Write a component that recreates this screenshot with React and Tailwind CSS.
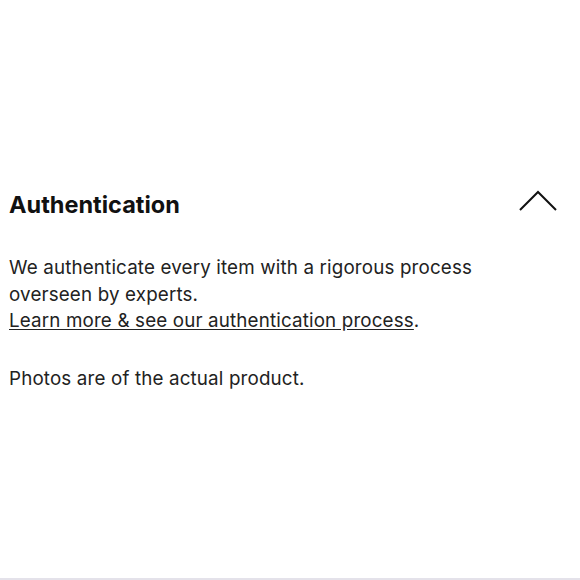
export default function App() {
  return (
    <div className="w-[580px] h-[580px] bg-white flex flex-col font-['Inter',Arial,sans-serif] text-[#222]">
      <div className="flex-1 px-[9px] pt-[190px]">
        <div className="flex items-center justify-between">
          <h2 className="text-[23.5px] leading-[30px] font-bold text-[#111]">Authentication</h2>
          <svg width="40" height="24" viewBox="0 0 40 24" className="mr-[13px] mt-[-6px]">
            <path d="M2 20 L20 2 L38 20" fill="none" stroke="#111" strokeWidth="2" />
          </svg>
        </div>
        <div className="mt-[35px] max-w-[500px] text-[18.8px] tracking-[0.15px] leading-[26.5px] text-[#222]">
          <p>We authenticate every item with a rigorous process overseen by experts.</p>
          <p>
            <a href="#" className="underline underline-offset-2">Learn more &amp; see our authentication process</a>.
          </p>
          <p className="mt-[31px]">Photos are of the actual product.</p>
        </div>
      </div>
      <div className="h-[2px] bg-[#e4e2ea]" />
    </div>
  );
}
